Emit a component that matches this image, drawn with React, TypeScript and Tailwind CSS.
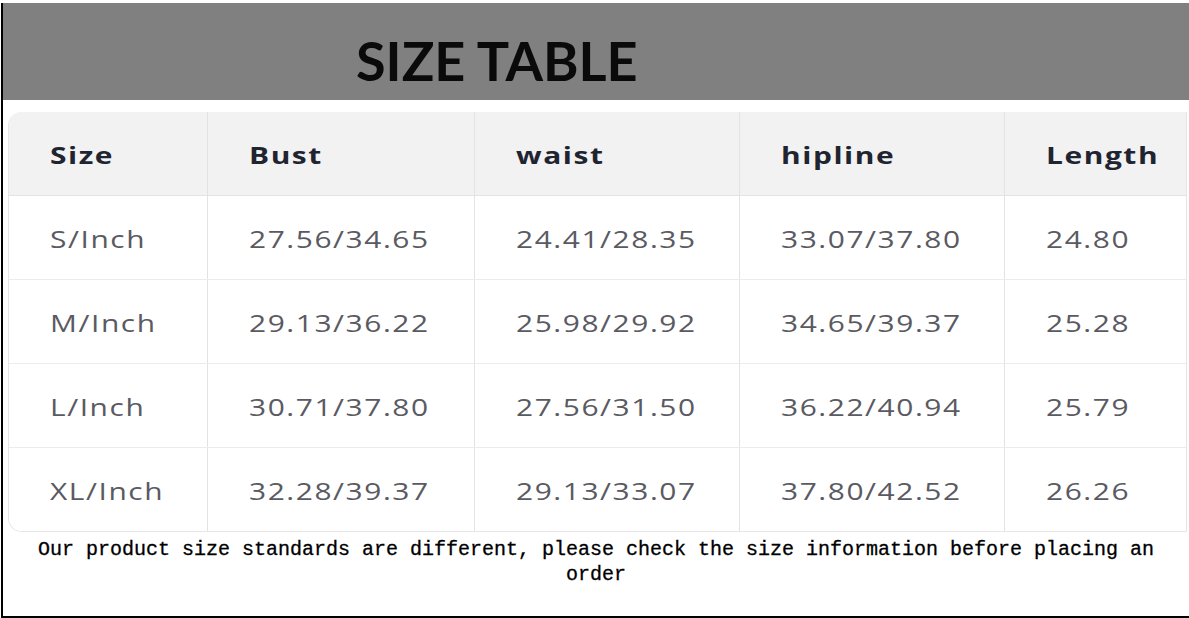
import React from 'react';

const headers = ['Size', 'Bust', 'waist', 'hipline', 'Length'];

const rows: string[][] = [
    ['S/Inch', '27.56/34.65', '24.41/28.35', '33.07/37.80', '24.80'],
    ['M/Inch', '29.13/36.22', '25.98/29.92', '34.65/39.37', '25.28'],
    ['L/Inch', '30.71/37.80', '27.56/31.50', '36.22/40.94', '25.79'],
    ['XL/Inch', '32.28/39.37', '29.13/33.07', '37.80/42.52', '26.26'],
];

const cols = 'grid grid-cols-[199px_267px_265px_265px_1fr]';

// text in the picture is stretched wide, so scale it on x
const Cell: React.FC<{ head?: boolean; last?: boolean; children: React.ReactNode }> = ({ head, last, children }) => (
    <div className={`flex items-center pl-[41px] pt-[3px] h-[83px] ${last ? '' : 'border-r border-[#e3e3e3]'}`}>
        <span
            className={`inline-block origin-left scale-x-[1.3] tracking-[1.2px] whitespace-nowrap ${head ? 'font-bold text-[#1f2430]' : 'text-[#5a5a62]'}`}
        >
            {children}
        </span>
    </div>
);

export default function App() {
    return (
        <div className="w-[1189px] h-[618px] bg-white pt-[3px] overflow-hidden">
            <div className="h-[615px] ml-px border-l-2 border-b-2 border-black flex flex-col">
                {/* Title bar */}
                <div className="h-[97px] shrink-0 bg-[#808080] pl-[353px] pt-[18px] flex items-center">
                    <h1 className="font-['Lato',sans-serif] font-bold text-[54px] leading-none text-[#0a0a0a]">SIZE TABLE</h1>
                </div>

                {/* Table */}
                <div className="pt-[12px] pl-[5px] pr-[2px]">
                    <div className="rounded-l-[14px] border-l border-r border-b border-[#e6e6e6] overflow-hidden font-['Open_Sans',sans-serif] text-[23px]">
                        <div className={`${cols} bg-[#f2f2f2] border-b border-[#e3e3e3]`}>
                            {headers.map((h, i) => (
                                <Cell key={h} head last={i === headers.length - 1}>{h}</Cell>
                            ))}
                        </div>
                        {rows.map((r, ri) => (
                            <div key={r[0]} className={`${cols} bg-white ${ri < rows.length - 1 ? 'border-b border-[#ececec]' : ''}`}>
                                {r.map((v, i) => (
                                    <Cell key={i} last={i === r.length - 1}>{v}</Cell>
                                ))}
                            </div>
                        ))}
                    </div>
                </div>

                {/* Note */}
                <p className="mt-[5px] px-[20px] text-center font-['Liberation_Mono',monospace] text-[20px] leading-[25px] text-black [-webkit-text-stroke:0.3px_black]">
                    Our product size standards are different, please check the size information before placing an order
                </p>
            </div>
        </div>
    );
}
